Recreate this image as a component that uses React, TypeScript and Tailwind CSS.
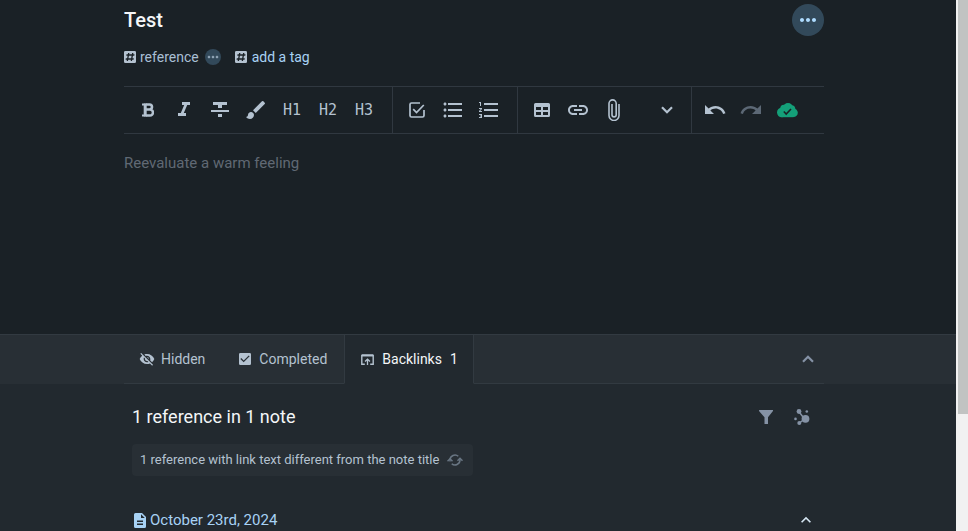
import type { ReactNode } from "react";
import {
  MdBrush,
  MdCheckBox,
  MdFormatItalic,
  MdFormatListBulleted,
  MdFormatListNumbered,
  MdFormatStrikethrough,
  MdInsertLink,
  MdKeyboardArrowUp,
  MdMoreHoriz,
  MdRedo,
  MdUndo,
  MdVisibilityOff,
} from "react-icons/md";

type IconProps = { className?: string };

function HashIcon() {
  return (
    <svg viewBox="3 3 18 18" className="size-3 shrink-0 text-[#b4c2d0]" fill="currentColor">
      <path d="M3 5a2 2 0 0 1 2-2h14a2 2 0 0 1 2 2v14a2 2 0 0 1-2 2H5a2 2 0 0 1-2-2V5m4 13h2l.35-2h4l-.35 2h2l.35-2h2l.36-2h-2l.7-4h2l.35-2h-2l.36-2h-2l-.36 2h-4l.36-2h-2l-.36 2h-2l-.35 2h2l-.7 4h-2l-.36 2h2L7 18m3.41-8h4l-.7 4h-4l.7-4z" />
    </svg>
  );
}

function BoldIcon() {
  return (
    <svg viewBox="0 0 12 14" className="h-3.5 w-3" fill="none" stroke="currentColor">
      <path d="M3.500 1.500h4a2.500 2.500 0 0 1 0 5h-4M3.500 6.500H8a3 3 0 0 1 0 6H3.500" strokeWidth="2.600" />
      <path d="M3.200.5v13" strokeWidth="3" />
      <path d="M0 1.500h3M0 12.500h3" strokeWidth="2" />
    </svg>
  );
}

function ChevronIcon({ className }: IconProps) {
  return (
    <svg viewBox="0 0 12 8" className={className} fill="none" stroke="currentColor" strokeWidth="2.200">
      <path d="M1 1.300 6 6.300l5-5" />
    </svg>
  );
}

function TaskIcon() {
  return (
    <svg viewBox="0 0 16 16" className="size-4" fill="none" stroke="currentColor" strokeWidth="1.700">
      <path d="M11 1H2.500A1.500 1.500 0 0 0 1 2.500v11A1.500 1.500 0 0 0 2.500 15h11a1.500 1.500 0 0 0 1.500-1.500V8" />
      <path d="M4.200 7.200 7.500 10.500 14.800 3" />
    </svg>
  );
}

function TableIcon() {
  return (
    <svg viewBox="0 0 16 14" className="h-3.5 w-4" fill="currentColor" fillRule="evenodd">
      <path d="M1.500 0h13A1.500 1.500 0 0 1 16 1.500v11a1.500 1.500 0 0 1-1.500 1.500h-13A1.500 1.500 0 0 1 0 12.500v-11A1.500 1.500 0 0 1 1.500 0zM2 4v3h5V4H2zm7 0v3h5V4H9zM2 9v3h5V9H2zm7 0v3h5V9H9z" />
    </svg>
  );
}

function PaperclipIcon() {
  return (
    <svg viewBox="0 0 12 22" className="h-[22px] w-3" fill="none" stroke="currentColor" strokeWidth="1.600">
      <path d="M11 5v11.500a4.900 4.900 0 0 1-10 0V4.500a3.600 3.600 0 0 1 7.200 0v11.300a2 2 0 0 1-4.200 0V5" />
    </svg>
  );
}

function CloudCheckIcon() {
  return (
    <svg viewBox="0 0 21 15" className="h-[15px] w-[21px]" fill="#14a079">
      <circle cx="4.800" cy="9.500" r="4.800" />
      <circle cx="7" cy="5.500" r="3.800" />
      <circle cx="11" cy="5" r="5" />
      <circle cx="14.500" cy="6" r="3.800" />
      <circle cx="16.500" cy="9.800" r="4.300" />
      <path d="M4.500 7h12v7.200h-12z" />
      <path d="M6.800 8.500 9.200 11l4.800-5" fill="none" stroke="#1a2126" strokeWidth="1.600" />
    </svg>
  );
}

function BacklinkIcon() {
  return (
    <svg viewBox="0 0 13 11" className="h-[11px] w-[13px] text-[#b4c2d0]" fill="none" stroke="currentColor">
      <path d="M3.800 10.200H.8V1.500h11.400v8.700H9.200" strokeWidth="1.400" />
      <path d="M.8 1.300h11.400" strokeWidth="2" />
      <path d="M6.500 11V5.500M4 7.500l2.500-2.300L9 7.500" strokeWidth="1.300" />
    </svg>
  );
}

function FunnelIcon() {
  return (
    <svg viewBox="0 0 14 14" className="size-3.5" fill="currentColor">
      <path d="M.3 0h13.400c.4 0 .4.900.1 1.300L9 7.200V14H5.500V7.200L.2 1.300C-.1.900 0 0 .3 0z" />
    </svg>
  );
}

function GraphIcon() {
  return (
    <svg viewBox="0 0 16 16" className="size-4" fill="currentColor">
      <path d="M5 2.800 10.500 10M5.500 14l5-4" stroke="currentColor" strokeWidth="1.500" />
      <circle cx="11.500" cy="9.800" r="3.900" />
      <circle cx="5" cy="2.500" r="2.400" />
      <circle cx="5.300" cy="14" r="2" />
      <circle cx="12.800" cy="2.500" r="1.300" />
      <circle cx="1.500" cy="9.900" r="1.300" />
    </svg>
  );
}

function SyncIcon() {
  return (
    <svg viewBox="0 0 16 12" className="h-3 w-4" fill="none" stroke="currentColor" strokeWidth="1.500">
      <path d="M3 7.500V6a5 5 0 0 1 8.300-3.700M13 4.500V6a5 5 0 0 1-8.300 3.700" />
      <path d="M.5 7.300 3 4.800l2.500 2.500M10.500 6.700 13 4.200l2.500 2.500" />
    </svg>
  );
}

function NoteIcon({ className }: IconProps) {
  return (
    <svg viewBox="0 0 12 15" className={className} fill="currentColor" fillRule="evenodd">
      <path d="M1.500 0H8l4 4v9.500a1.500 1.500 0 0 1-1.500 1.500h-9A1.500 1.500 0 0 1 0 13.500v-12A1.500 1.500 0 0 1 1.500 0zM7 1.200V5h3.800L7 1.200zM3 7.500V9h6V7.500H3zm0 3V12h6v-1.500H3z" />
    </svg>
  );
}

function ToolButton({ label, children }: { label: string; children: ReactNode }) {
  return (
    <button aria-label={label} className="flex h-9 w-9 items-center justify-center">
      {children}
    </button>
  );
}

function Heading({ level }: { level: number }) {
  return (
    <ToolButton label={`Heading ${level}`}>
      <span className="font-['DejaVu_Sans_Mono',monospace] text-[15px]">H{level}</span>
    </ToolButton>
  );
}

function Toolbar() {
  return (
    <div className="mt-[17px] flex h-12 items-stretch border-y border-[#303840] pt-px text-[#b4c2d0]">
      <div className="-mt-px flex items-center border-r border-[#303840] pr-2.5 pl-1.5">
        <ToolButton label="Bold"><BoldIcon /></ToolButton>
        <ToolButton label="Italic"><MdFormatItalic className="size-6" /></ToolButton>
        <ToolButton label="Strikethrough"><MdFormatStrikethrough className="size-6" /></ToolButton>
        <ToolButton label="Highlight"><MdBrush className="size-6" /></ToolButton>
        <Heading level={1} />
        <Heading level={2} />
        <Heading level={3} />
      </div>
      <div className="-mt-px flex items-center border-r border-[#303840] pr-2.5 pl-1.5">
        <ToolButton label="Task list"><TaskIcon /></ToolButton>
        <ToolButton label="Bullet list"><MdFormatListBulleted className="size-6" /></ToolButton>
        <ToolButton label="Numbered list"><MdFormatListNumbered className="size-6" /></ToolButton>
      </div>
      <div className="-mt-px flex items-center border-r border-[#303840] pr-1.5 pl-1.5">
        <ToolButton label="Table"><TableIcon /></ToolButton>
        <ToolButton label="Link"><MdInsertLink className="size-6" /></ToolButton>
        <ToolButton label="Attach file"><PaperclipIcon /></ToolButton>
        <div className="ml-[17px]">
          <ToolButton label="More tools"><ChevronIcon className="h-2 w-3" /></ToolButton>
        </div>
      </div>
      <div className="-mt-px flex items-center pl-[5px]">
        <ToolButton label="Undo"><MdUndo className="size-6" /></ToolButton>
        <ToolButton label="Redo"><MdRedo className="size-6 text-[#5c6875]" /></ToolButton>
        <ToolButton label="Saved"><CloudCheckIcon /></ToolButton>
      </div>
    </div>
  );
}

function Editor() {
  return (
    <section className="mx-auto h-[334px] w-full max-w-[700px] pt-1">
      <header className="flex h-8 items-center justify-between">
        <h1 className="text-xl font-medium text-[#f4f6f8]">Test</h1>
        <button
          aria-label="Note menu"
          className="flex size-8 items-center justify-center rounded-full bg-[#32495a] text-[#aedcff]"
        >
          <MdMoreHoriz className="size-6" />
        </button>
      </header>

      <div className="mt-[9px] flex h-6 items-center text-sm">
        <a href="#reference" className="flex items-center gap-1 text-[#a9bfd4]">
          <HashIcon />
          reference
        </a>
        <button
          aria-label="Tag menu"
          className="ml-1.5 flex size-4 items-center justify-center rounded-full bg-[#32495a] text-[#8fa3b5]"
        >
          <MdMoreHoriz className="size-4" />
        </button>
        <button className="ml-3.5 flex items-center gap-[5px] text-[#a8d2f5]">
          <HashIcon />
          add a tag
        </button>
      </div>

      <Toolbar />

      <textarea
        aria-label="Note"
        placeholder="Reevaluate a warm feeling"
        className="mt-[17px] block h-40 w-full resize-none text-[15px] leading-6 outline-none placeholder:text-[#606974]"
      />
    </section>
  );
}

function Tabs() {
  return (
    <div className="border-t border-[#323a41] bg-[#282f35] pr-2">
      <div className="mx-auto flex h-[49px] w-full max-w-[700px] text-sm text-[#b4c2d0]">
        <button className="flex items-center gap-1.5 border-b border-[#323a41] pr-4 pl-[15px]">
          <MdVisibilityOff className="size-4" />
          Hidden
        </button>
        <button className="flex items-center gap-1.5 border-b border-[#323a41] pr-[17px] pl-4">
          <MdCheckBox className="size-4" />
          Completed
        </button>
        <button className="flex items-center gap-2 border-x border-b border-x-[#323a41] border-b-[#22292f] bg-[#22292f] pr-[15px] pl-4 text-[#f4f6f8]">
          <BacklinkIcon />
          Backlinks
          <span>1</span>
        </button>
        <div className="flex flex-1 items-center justify-end border-b border-[#323a41] pr-2.5">
          <button aria-label="Collapse panel" className="text-[#8592a5]">
            <ChevronIcon className="h-2 w-3 rotate-180" />
          </button>
        </div>
      </div>
    </div>
  );
}

function Backlinks() {
  return (
    <section className="mx-auto w-full max-w-[700px] px-2 pt-[15px]">
      <div className="-mr-1 flex h-9 items-center justify-between">
        <h2 className="text-lg text-[#f4f6f8]">1 reference in 1 note</h2>
        <div className="flex text-[#8592a5]">
          <ToolButton label="Filter"><FunnelIcon /></ToolButton>
          <ToolButton label="Graph"><GraphIcon /></ToolButton>
        </div>
      </div>

      <button className="mt-[9px] flex h-8 items-center gap-2 rounded bg-[#282f35] pr-2.5 pl-2 text-[13px] text-[#b4c2d0]">
        1 reference with link text different from the note title
        <span className="text-[#697683]"><SyncIcon /></span>
      </button>

      <div className="mt-8 flex h-6 items-center justify-between text-[15px]">
        <a href="#october-23rd" className="flex items-center gap-1 pl-0.5 text-[#a8d2f5]">
          <NoteIcon className="h-[15px] w-3" />
          October 23rd, 2024
        </a>
        <button aria-label="Collapse note" className="text-[#d5e5f2]">
          <MdKeyboardArrowUp className="size-5" />
        </button>
      </div>
    </section>
  );
}

export default function App() {
  return (
    <div className="flex h-screen overflow-hidden bg-[#22292f] font-[Roboto,sans-serif]">
      <main className="min-w-0 flex-1">
        <div className="bg-[#1a2126] pr-2">
          <Editor />
        </div>
        <Tabs />
        <div className="pr-2">
          <Backlinks />
        </div>
      </main>
      <div className="w-3 shrink-0 bg-[#f1f1f1] pl-0.5">
        <div className="h-[78%] bg-[#c1c3c2]" />
      </div>
    </div>
  );
}
